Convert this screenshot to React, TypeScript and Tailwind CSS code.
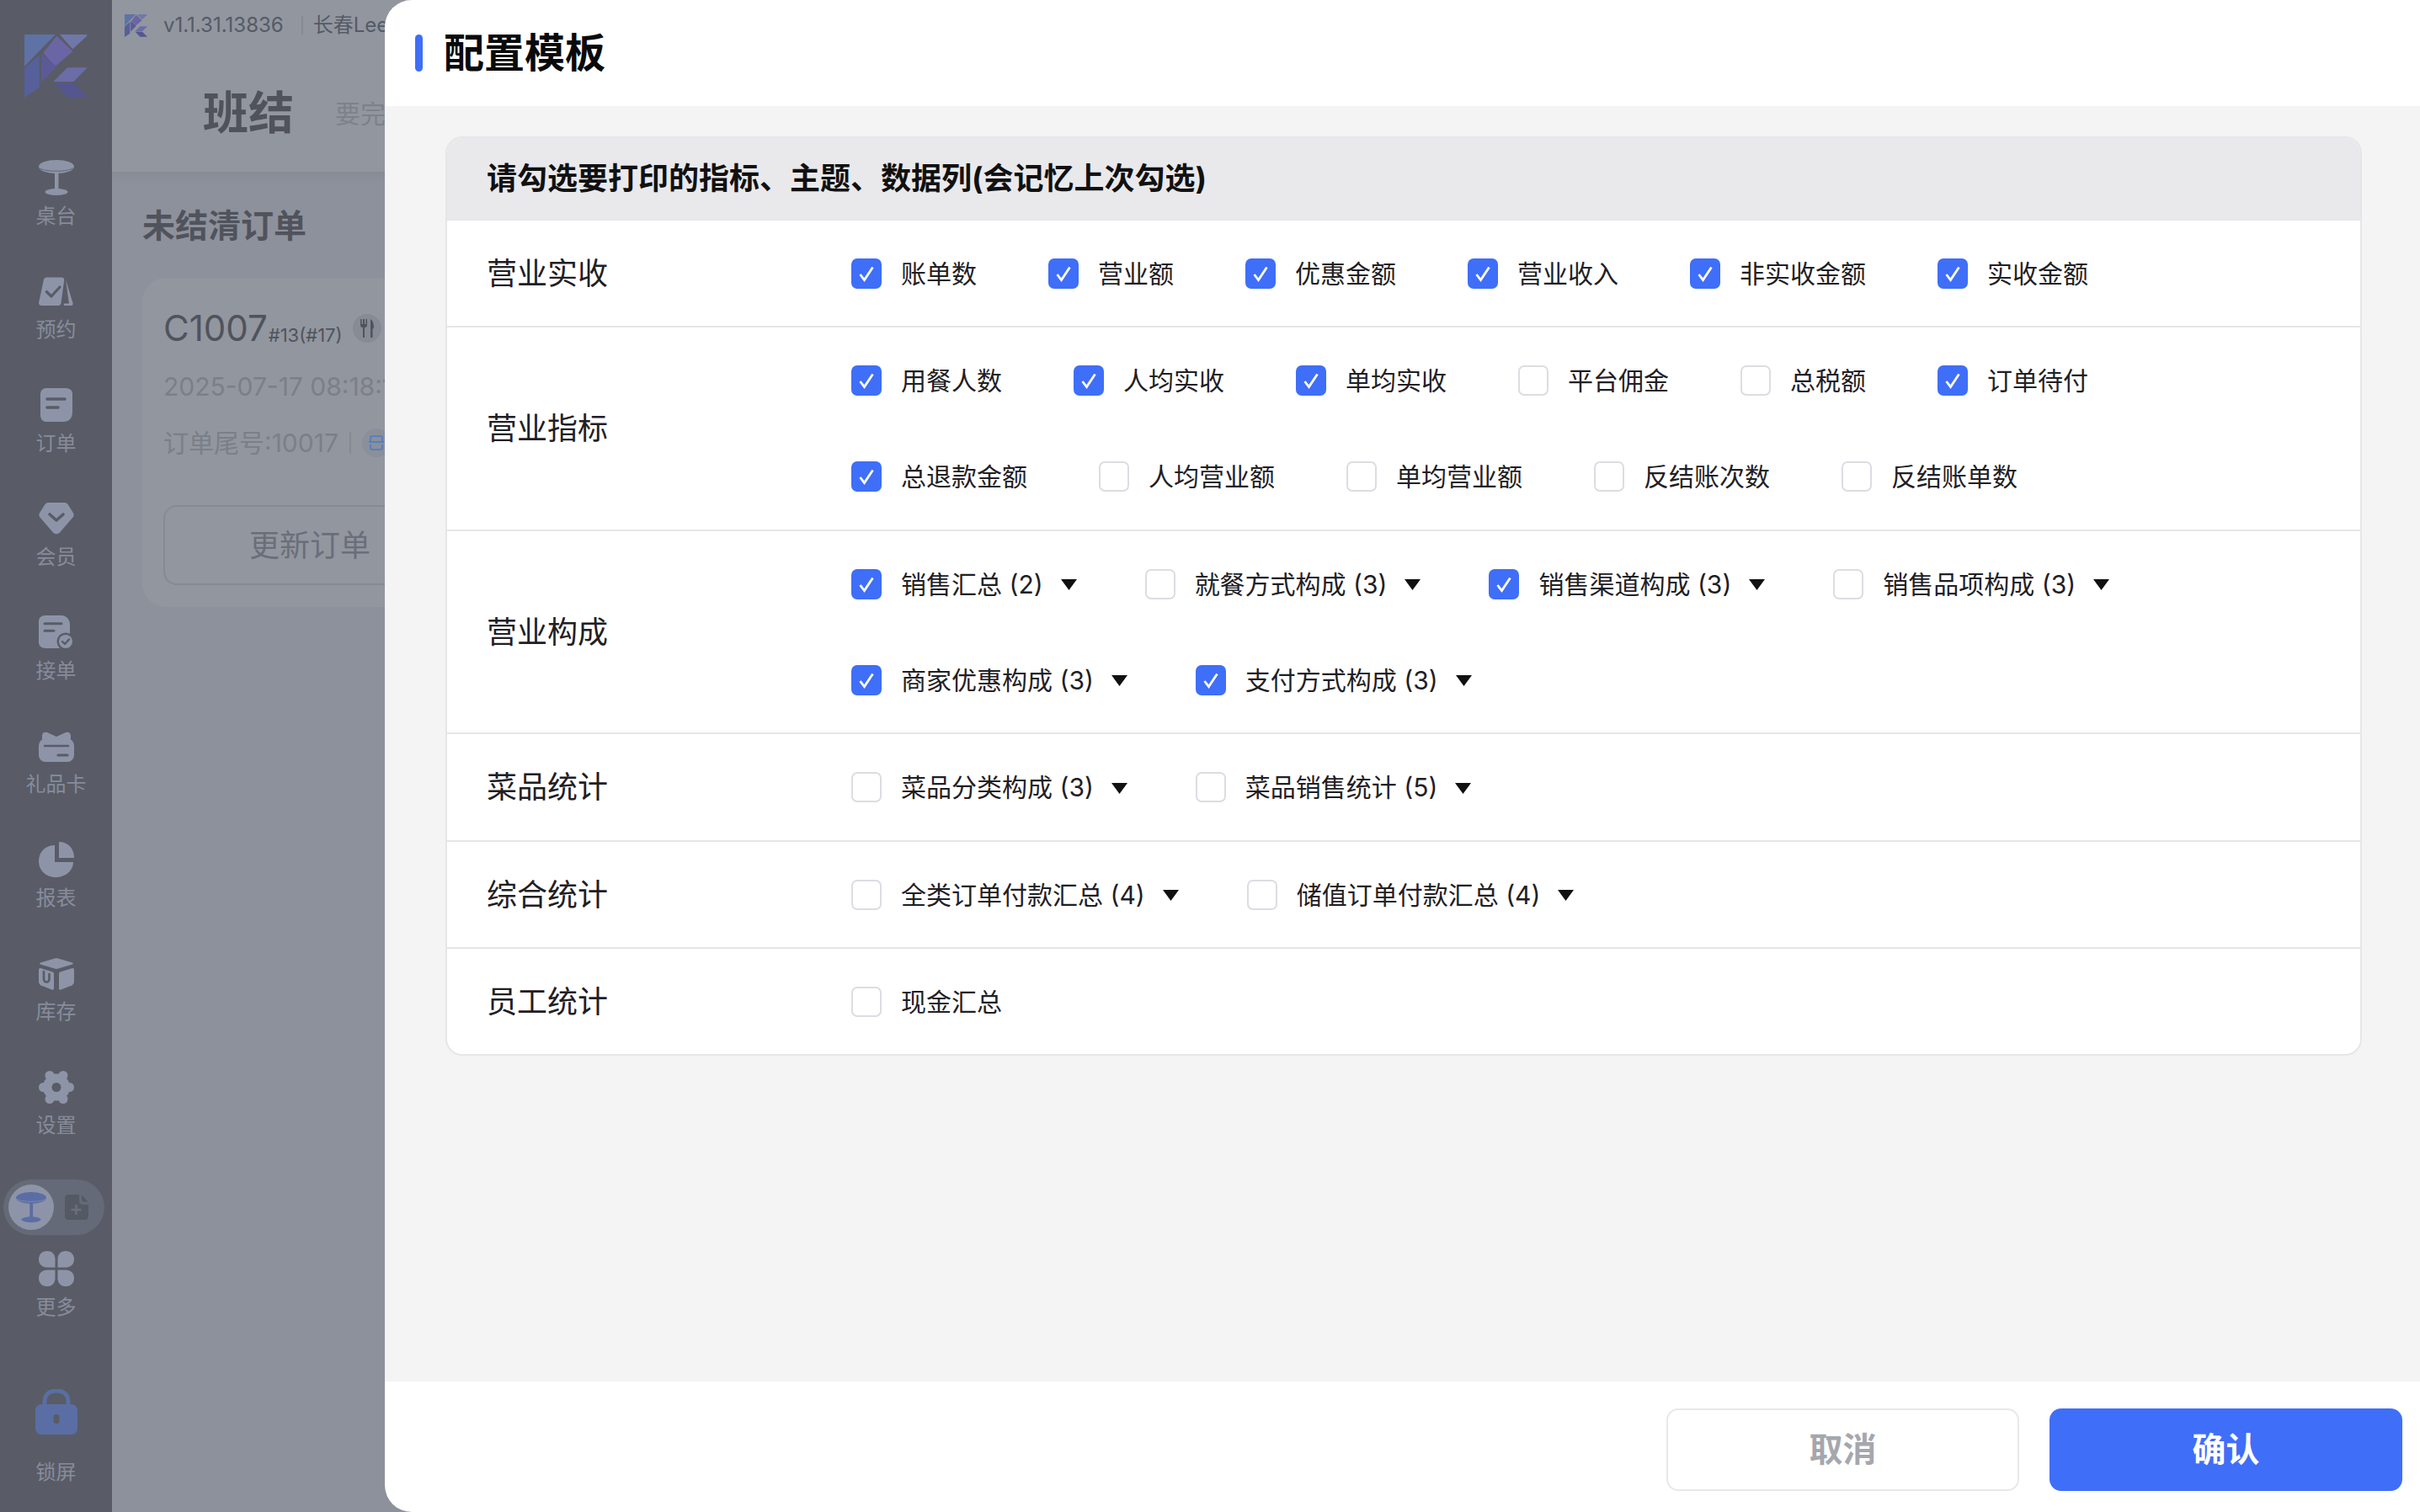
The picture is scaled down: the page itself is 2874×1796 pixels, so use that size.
import React from "react";

function Logo({ size }: { size: number }) {
  return (
    <svg width={size} height={size} viewBox="0 0 75 75">
      <path d="M1 0H36.700L0 38V1Z" fill="#5f72a6" />
      <path d="M38.300 1.700L57.300 20L36.700 37.700L22.300 21.700Z" fill="#6a66a5" />
      <path d="M42 0H73C74.500 0 75 1 74 2L57.300 17.300Z" fill="#6f78a8" />
      <path d="M0 40L17.700 24.300V63L0 75Z" fill="#56609a" />
      <path d="M20 21.700L38.300 38.300L20 56.700Z" fill="#5c5a95" />
      <path d="M34.300 56L51 39.300H75L58.300 56Z" fill="#6a6da6" />
      <path d="M35 57.700H58.300L75 74.300H51Z" fill="#55558f" />
    </svg>
  );
}

const D = "#595c66";
const C = "#8e94a8";

function TableIcon({ color = C, seam = D }: { color?: string; seam?: string }) {
  return (
    <svg width="100%" height="100%" viewBox="0 0 42 42">
      <ellipse cx="21" cy="8" rx="21" ry="8" fill={color} />
      <path d="M1 9.500C6 14.500 36 14.500 41 9.500" stroke={seam} strokeWidth="0.800" fill="none" />
      <rect x="19" y="15" width="4.500" height="20" fill={color} />
      <ellipse cx="21" cy="38" rx="13.500" ry="4" fill={color} />
    </svg>
  );
}

const icons: React.ReactNode[] = [
  <TableIcon key="t" />,
  <svg key="a" width="42" height="42" viewBox="0 0 42 42">
    <path d="M9 4.500H27C29.500 4.500 30.500 6 30.200 8L26.500 35C26.200 37 25 38 23 38H3.500C1 38 -0.400 36.500 0.200 34L6 7C6.500 5.500 7.500 4.500 9 4.500Z" fill={C} />
    <path d="M32 7L40.500 35C41 37 40 38 38.500 38H30.500C29.500 38 29.500 35.500 30.500 35.500H35.500C36 35.500 36 35 35.800 34.500Z" fill={C} />
    <path d="M9.300 21.500L15 27L25 16" stroke={D} strokeWidth="3.200" fill="none" strokeLinecap="round" strokeLinejoin="round" />
  </svg>,
  <svg key="o" width="42" height="42" viewBox="0 0 42 42">
    <path d="M9 1H32C37 1 40 4 40 8V29C40 37 36 41 29 41H9C5 41 2 38 2 33V8C2 4 5 1 9 1Z" fill={C} />
    <path d="M10 14H31M10 24H23" stroke={D} strokeWidth="3.600" strokeLinecap="round" />
  </svg>,
  <svg key="m" width="42" height="42" viewBox="0 0 42 42">
    <path d="M12 2H30C32 2 33 2.500 34.500 4L40.500 13.500C42 15.500 42 18 40.500 19.500L25 37.500C22.800 39.800 19.200 39.800 17 37.500L1.500 19.500C0 18 0 15.500 1.500 13.500L7.500 4C9 2.500 10 2 12 2Z" fill={C} />
    <path d="M13 16L21 23L29 16" stroke={D} strokeWidth="3.600" fill="none" strokeLinecap="round" strokeLinejoin="round" />
  </svg>,
  <svg key="r" width="42" height="42" viewBox="0 0 42 42">
    <path d="M8 1H27C33 1 37 6 37 12V40H8C3 40 0 37 0 33V8C0 4 3 1 8 1Z" fill={C} />
    <path d="M7 10.700H27M7 19.300H18" stroke={D} strokeWidth="3" strokeLinecap="round" />
    <circle cx="32" cy="32" r="10.500" fill={D} />
    <circle cx="32" cy="32" r="8" fill={C} />
    <path d="M28 32L31 35L36 29.500" stroke={D} strokeWidth="2.400" fill="none" strokeLinecap="round" strokeLinejoin="round" />
  </svg>,
  <svg key="g" width="42" height="42" viewBox="0 0 42 42">
    <path d="M4 14V9C4 5 7 4 10 5L21 10L32 5C35 4 38 5 38 9V14Z" fill={C} />
    <rect y="12.500" width="42" height="27.500" rx="8" fill={C} />
    <path d="M7 21H35" stroke={D} strokeWidth="2.400" strokeLinecap="round" />
    <path d="M23 32H34" stroke={D} strokeWidth="3.200" strokeLinecap="round" />
  </svg>,
  <svg key="p" width="42" height="42" viewBox="0 0 42 42">
    <path d="M19 4V24H41C41 34 32 42 20 42C8 42 0 33 0 23C0 12 8 4 19 4Z" fill={C} />
    <path d="M24 0C34 0 42 7 42 19H24Z" fill={C} />
  </svg>,
  <svg key="b" width="42" height="42" viewBox="0 0 42 42">
    <path d="M19 3.500C20 3 22 3 23 3.500L40 8.500C41 9 41 10 40 10.500L23 15.500C22 16 20 16 19 15.500L2 10.500C1 10 1 9 2 8.500Z" fill={C} />
    <path d="M2 15L16.500 19.500C17.500 20 18 20.500 18 22V39C18 40.500 17 41 15.500 40.500L4 36C1.500 35 0 33.500 0 31V17C0 15.500 1 14.700 2 15Z" fill={C} />
    <path d="M6 19V28C6 30 7.500 31.500 9.300 31.500C11 31.500 12.500 30 12.500 28V22" stroke={D} strokeWidth="2.600" fill="none" strokeLinecap="round" />
    <path d="M40 15L25.500 19.500C24.500 20 24 20.500 24 22V39C24 40.500 25 41 26.500 40.500L38 36C40.500 35 42 33.500 42 31V17C42 15.500 41 14.700 40 15Z" fill={C} />
  </svg>,
  <svg key="s" width="42" height="42" viewBox="0 0 42 42">
    <circle cx="21" cy="21.500" r="16" fill={C} />
    <circle cx="36.500" cy="21.500" r="5.500" fill={C} />
    <circle cx="5.500" cy="21.500" r="5.500" fill={C} />
    <circle cx="13" cy="7.500" r="5.500" fill={C} />
    <circle cx="29" cy="7.500" r="5.500" fill={C} />
    <circle cx="13" cy="35.500" r="5.500" fill={C} />
    <circle cx="29" cy="35.500" r="5.500" fill={C} />
    <circle cx="21" cy="21.500" r="5.500" fill={D} />
  </svg>,
];

const nav = ["桌台", "预约", "订单", "会员", "接单", "礼品卡", "报表", "库存", "设置"];

function NavItem({ icon, label }: { icon: React.ReactNode; label: string }) {
  return (
    <div className="flex flex-col items-center gap-[9px]">
      <div className="h-[42px] w-[42px]">{icon}</div>
      <span className="text-[24px] leading-[32px] text-[#878c9c]">{label}</span>
    </div>
  );
}

function Sidebar() {
  return (
    <aside className="flex h-full w-[133px] shrink-0 flex-col items-center bg-[#595c66]">
      <div className="flex h-[190px] w-full justify-center pt-[41px]">
        <Logo size={75} />
      </div>
      <div className="flex flex-col items-center gap-[52px]">
        {nav.map((n, i) => (
          <NavItem key={n} label={n} icon={icons[i]} />
        ))}
      </div>
      <div className="mr-[5px] mt-[48px] flex h-[66px] w-[120px] items-center rounded-full bg-[#646a77] pl-[6px]">
        <div className="flex h-[54px] w-[54px] items-center justify-center rounded-full bg-[#8e94a8]">
          <div className="h-[36px] w-[36px]">
            <TableIcon color="#5a6ea5" seam="#8e94a8" />
          </div>
        </div>
        <svg className="ml-[13px]" width="28" height="30" viewBox="0 0 28 30">
          <path d="M4 0H17V6C17 10 19 12 23 12H28V25C28 28 26 30 24 30H4C2 30 0 28 0 25V5C0 2 2 0 4 0Z" fill="#555964" />
          <path d="M20 0.500L27.500 8.500H23C21 8.500 20 7.500 20 6Z" fill="#555964" />
          <path d="M7.500 18H19.500M13.500 12V24" stroke="#6a6f7d" strokeWidth="2.500" />
        </svg>
      </div>
      <div className="mt-[19px]">
        <NavItem
          label="更多"
          icon={
            <svg width="42" height="42" viewBox="0 0 42 42">
              <path d="M19.500 19.500H10C4 19.500 0 15.500 0 10C0 4 4 0 10 0C16 0 19.500 4 19.500 10Z" fill={C} />
              <path d="M22.500 19.500H32C38 19.500 42 15.500 42 10C42 4 38 0 32 0C26 0 22.500 4 22.500 10Z" fill={C} />
              <path d="M19.500 22.500H10C4 22.500 0 26.500 0 32C0 38 4 42 10 42C16 42 19.500 38 19.500 32Z" fill={C} />
              <path d="M22.500 22.500H32C38 22.500 42 26.500 42 32C42 38 38 42 32 42C26 42 22.500 38 22.500 32Z" fill={C} />
            </svg>
          }
        />
      </div>
      <div className="mt-auto flex flex-col items-center gap-[29px] pb-[31px]">
        <svg width="50" height="54" viewBox="0 0 50 54">
          <path d="M11 20V15C11 6 17 2 25 2C33 2 39 6 39 15V20" stroke="#5a6ea5" strokeWidth="5" fill="none" />
          <rect y="18" width="50" height="36" rx="7" fill="#5a6ea5" />
          <rect x="21.500" y="30" width="7" height="11" rx="3" fill="#595c66" />
        </svg>
        <span className="text-[24px] leading-[32px] text-[#878c9c]">锁屏</span>
      </div>
    </aside>
  );
}

function Background() {
  return (
    <main className="min-w-0 flex-1 overflow-hidden whitespace-nowrap bg-[#8d919b]">
      <header className="h-[204px] bg-[#92969f] shadow-[0_4px_10px_rgba(60,60,70,0.08)]">
        <div className="flex h-[60px] items-center pl-[15px]">
          <Logo size={27} />
          <span className="ml-[19px] text-[24px] text-[#555a66]">v1.1.31.13836</span>
          <span className="ml-[21px] h-[22px] w-[2px] bg-[#868a94]" />
          <span className="ml-[12px] text-[24px] text-[#555a66]">长春Lee</span>
        </div>
        <div className="flex items-center pl-[108px] pt-[37px]">
          <span className="text-[54px] font-bold leading-[76px] text-[#50535c]">班结</span>
          <span className="ml-[49px] text-[30px] text-[#7d818c]">要完成班结</span>
        </div>
      </header>
      <div className="pl-[36px] pt-[36px]">
        <h2 className="text-[39px] font-bold leading-[56px] text-[#50535c]">未结清订单</h2>
        <div className="mt-[34px] h-[391px] w-[700px] rounded-[28px] bg-[#92969f] pl-[25px] pt-[32px]">
          <div className="flex items-center">
            <span className="text-[42px] leading-[56px] text-[#50535c]">C1007</span>
            <span className="ml-[1px] mt-[16px] text-[22px] text-[#50535c]">#13(#17)</span>
            <span className="ml-[12px] flex h-[34px] w-[34px] items-center justify-center rounded-full bg-[#878b95]">
              <svg width="18" height="22" viewBox="0 0 18 22">
                <path d="M1 0V7C1 9 2 10 4 10V22H6V10C8 10 9 9 9 7V0H7.500V6H6V0H4V6H2.500V0Z" fill="#50535c" />
                <path d="M13 0C16 2 17 6 17 10L15.500 12V22H13Z" fill="#50535c" />
              </svg>
            </span>
          </div>
          <div className="mt-[21px] text-[30px] leading-[40px] text-[#7b7f8a]">2025-07-17 08:18:15</div>
          <div className="mt-[27px] flex items-center text-[30px] leading-[40px] text-[#7b7f8a]">
            <span>订单尾号:10017</span>
            <span className="ml-[13px] h-[26px] w-[2px] bg-[#868a94]" />
            <span className="ml-[13px] flex h-[34px] w-[34px] items-center justify-center rounded-full bg-[#8a8f9c]">
              <svg width="20" height="18" viewBox="0 0 20 18" fill="none" stroke="#5a7fb8" strokeWidth="2">
                <path d="M3 8V3C3 2 4 1 5 1H15C16 1 17 2 17 3V8M1 8H19M3 11V15C3 16 4 17 5 17H15C16 17 17 16 17 15V11" />
              </svg>
            </span>
          </div>
          <div className="mt-[54px] flex h-[95px] w-[640px] items-center rounded-[16px] border-2 border-[#868a94] pl-[100px] text-[36px] text-[#6a6e79]">
            更新订单
          </div>
        </div>
      </div>
    </main>
  );
}

function Check({ on }: { on: boolean }) {
  return on ? (
    <span className="flex h-[36px] w-[36px] shrink-0 items-center justify-center rounded-[7px] bg-[#3f6ef8]">
      <svg width="20" height="20" viewBox="0 0 20 20">
        <path d="M2.500 11L7.500 17.500L17.500 2.500" stroke="#fff" strokeWidth="2.800" fill="none" />
      </svg>
    </span>
  ) : (
    <span className="block h-[36px] w-[36px] shrink-0 rounded-[7px] border-2 border-[#dcdde3] bg-white" />
  );
}

type Item = { t: string; on?: boolean; c?: boolean };

function Option({ t, on, c }: Item) {
  return (
    <div className={`flex h-[36px] items-center ${c ? "mr-[-4px]" : ""}`}>
      <Check on={!!on} />
      <span className="ml-[23px] whitespace-pre text-[30px] leading-[36px] text-[#1f2024]">{t}</span>
      {c && (
        <svg className="ml-[21px] mt-[2px]" width="19" height="13" viewBox="0 0 19 13">
          <path d="M0 0H19L9.500 13Z" fill="#111" />
        </svg>
      )}
    </div>
  );
}

const rows: { label: string; py: string; items: Item[] }[] = [
  {
    label: "营业实收",
    py: "py-[44.5px]",
    items: [
      { t: "账单数", on: true },
      { t: "营业额", on: true },
      { t: "优惠金额", on: true },
      { t: "营业收入", on: true },
      { t: "非实收金额", on: true },
      { t: "实收金额", on: true },
    ],
  },
  {
    label: "营业指标",
    py: "py-[45px]",
    items: [
      { t: "用餐人数", on: true },
      { t: "人均实收", on: true },
      { t: "单均实收", on: true },
      { t: "平台佣金" },
      { t: "总税额" },
      { t: "订单待付", on: true },
      { t: "总退款金额", on: true },
      { t: "人均营业额" },
      { t: "单均营业额" },
      { t: "反结账次数" },
      { t: "反结账单数" },
    ],
  },
  {
    label: "营业构成",
    py: "py-[44.5px]",
    items: [
      { t: "销售汇总 (2)", on: true, c: true },
      { t: "就餐方式构成 (3)", c: true },
      { t: "销售渠道构成 (3)", on: true, c: true },
      { t: "销售品项构成 (3)", c: true },
      { t: "商家优惠构成 (3)", on: true, c: true },
      { t: "支付方式构成 (3)", on: true, c: true },
    ],
  },
  {
    label: "菜品统计",
    py: "py-[45px]",
    items: [
      { t: "菜品分类构成 (3)", c: true },
      { t: "菜品销售统计 (5)", c: true },
    ],
  },
  {
    label: "综合统计",
    py: "py-[44.5px]",
    items: [
      { t: "全类订单付款汇总 (4)", c: true },
      { t: "储值订单付款汇总 (4)", c: true },
    ],
  },
  { label: "员工统计", py: "py-[44.5px]", items: [{ t: "现金汇总" }] },
];

function Modal() {
  return (
    <section className="absolute inset-y-0 left-[457px] right-0 flex flex-col overflow-hidden rounded-l-[32px] bg-white">
      <div className="flex h-[126px] shrink-0 items-center gap-[25px] pl-[36px]">
        <span className="h-[44px] w-[9px] rounded-full bg-[#3f6ef8]" />
        <h1 className="text-[48px] font-bold leading-[60px] text-[#0a0a0a]">配置模板</h1>
      </div>
      <div className="min-h-0 flex-1 bg-[#f4f4f5] pl-[72px] pr-[69px] pt-[36px]">
        <div className="overflow-hidden rounded-[20px] border-2 border-[#e6e6e9] bg-white">
          <div className="flex h-[96px] items-center bg-[#e9e9ec] pl-[47px] text-[36px] font-bold text-[#111]">
            请勾选要打印的指标、主题、数据列(会记忆上次勾选)
          </div>
          {rows.map((r) => (
            <div key={r.label} className={`flex items-center border-t-2 border-[#e6e6e9] ${r.py}`}>
              <div className="w-[480px] shrink-0 pl-[47px] text-[36px] leading-[36px] text-[#1f2024]">{r.label}</div>
              <div className="flex flex-wrap gap-x-[85px] gap-y-[78px] pr-[200px]">
                {r.items.map((it) => (
                  <Option key={it.t} {...it} />
                ))}
              </div>
            </div>
          ))}
        </div>
      </div>
      <div className="flex h-[155px] shrink-0 justify-end gap-[36px] pr-[21px] pt-[32px]">
        <button className="h-[98px] w-[419px] rounded-[14px] border-2 border-[#e8e8ea] bg-white text-[40px] font-bold text-[#a6a7ad]">
          取消
        </button>
        <button className="h-[98px] w-[419px] rounded-[14px] bg-[#3f6ef8] text-[40px] font-bold text-white">
          确认
        </button>
      </div>
    </section>
  );
}

export default function App() {
  return (
    <div className="relative flex h-screen w-screen overflow-hidden [font-family:Inter,'Noto_Sans_CJK_SC',sans-serif]">
      <Sidebar />
      <Background />
      <Modal />
    </div>
  );
}
